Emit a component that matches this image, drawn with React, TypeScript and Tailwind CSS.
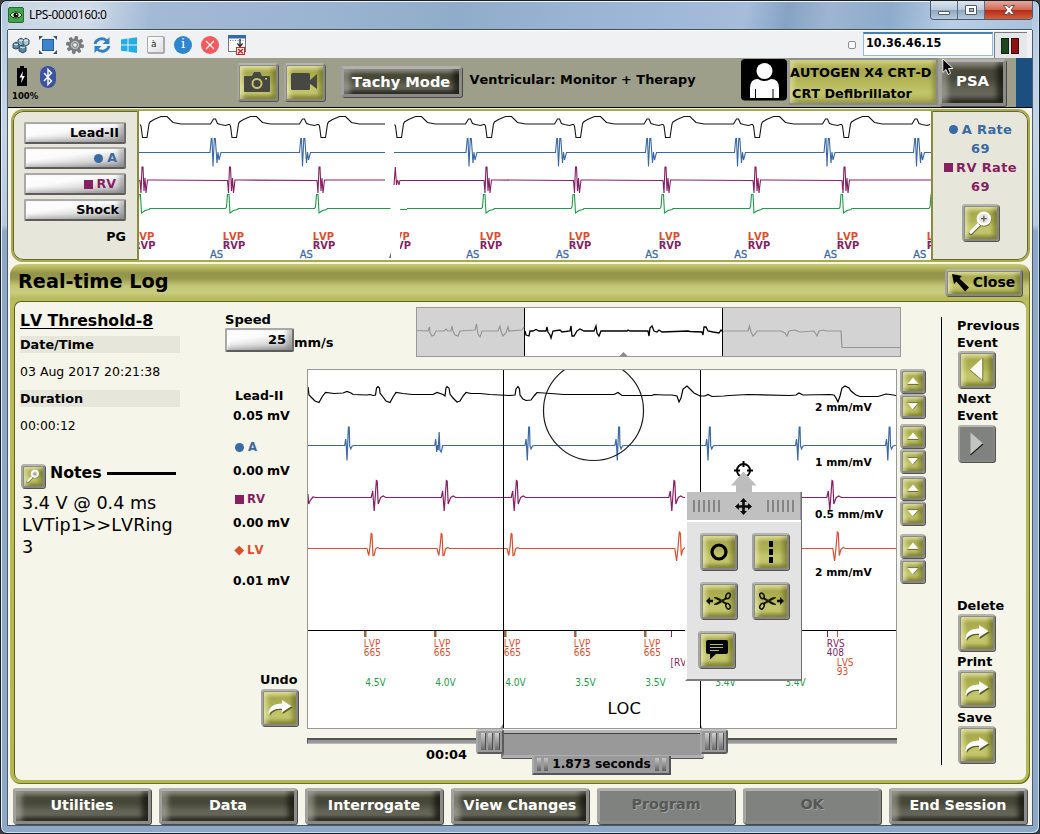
import React from 'react';

const EDGE = 'border-[2px] border-t-[#b4b4b2] border-l-[#a4a4a2] border-r-[#868684] border-b-[#868684] rounded-[3px]';
const OLIVE =
  EDGE +
  ' flex shrink-0 items-center justify-center outline-none bg-[linear-gradient(180deg,#c8ca72_0%,#a9aa4e_22%,#b1b353_45%,#c2c467_62%,#c5c76e_84%,#a8a94c_100%)] shadow-[inset_1px_1px_0_#8c8c80,inset_4px_3px_4px_rgba(244,244,200,0.6),inset_-4px_-3px_4px_rgba(84,86,14,0.5),1px_1px_0_#55554f]';
const DARK =
  'border-[3px] border-t-[#b0b0ae] border-l-[#a0a09e] border-r-[#8a8a88] border-b-[#8a8a88] rounded-[3px] flex shrink-0 items-center justify-center text-white bg-[linear-gradient(180deg,#77786a_0%,#474838_22%,#46473a_40%,#616253_65%,#66675a_80%,#33342a_100%)] shadow-[inset_6px_2px_5px_rgba(215,215,205,0.4),inset_-6px_-2px_5px_rgba(15,16,8,0.7),1px_1px_0_#4a4a46]';
const OFF =
  'border-[3px] border-t-[#b0b0ae] border-l-[#a4a4a2] border-r-[#868684] border-b-[#868684] rounded-[3px] flex shrink-0 items-center justify-center text-[#555855] bg-[#80827f] shadow-[1px_1px_0_#4a4a46]';
const FIELD =
  'border-[2px] border-t-[#a9a9a9] border-l-[#a9a9a9] border-r-[#6e6e6e] border-b-[#5c5c5c] rounded-[2px] flex shrink-0 items-center justify-end bg-[linear-gradient(172deg,#ffffff_0%,#fbfbfb_38%,#d4d4d4_72%,#a0a0a0_100%)] shadow-[inset_-5px_-2px_4px_rgba(90,90,90,0.35),inset_2px_2px_3px_#ffffff]';

type P = [number, number][];
const pts = (a: P) => a.map((p) => p.join(',')).join(' ');

const RedoArrow = () => (
  <svg width="26" height="20" viewBox="0 0 26 20">
    <path d="M2 17C2 9 7 5.500 15 5.500V2L25 8.500L15 15V11C9 10.500 5 12 2 17Z" transform="translate(.8 1)" fill="#5c5d30" />
    <path d="M1.500 16.500C1.500 9 7 5.500 15 5.500V2L24.500 8.200L15 14.200V10.800C9 10.300 4.500 12 1.500 16.500Z" fill="#fff" />
  </svg>
);

const Magnifier = ({ size, plus }: { size: number; plus?: boolean }) => (
  <svg width={size} height={size} viewBox="0 0 26 26">
    <path d="M3 24L12 15" stroke="#6b6c38" strokeWidth="4.500" strokeLinecap="round" />
    <path d="M3 23L12 14" stroke="#fff" strokeWidth="3.500" strokeLinecap="round" />
    <circle cx="17" cy="10" r="7.500" fill="#77783e" />
    <circle cx="16.500" cy="9" r="7.500" fill="#fff" />
    <circle cx="16.500" cy="9" r="5" fill="#e4e4dc" />
    {plus ? <path d="M13.500 9h6M16.500 6v6" stroke="#555" strokeWidth="1.300" /> : <circle cx="16.500" cy="9" r="3" fill="#a5a68a" />}
  </svg>
);

const Dot = () => <span className="size-[9px] rounded-full bg-[#3a69a3]" />;
const Square = () => <span className="size-[9px] bg-[#871f63]" />;

function ToolbarIcons() {
  return (
    <div className="flex items-center gap-[9px] pl-[4px]">
      <svg width="18" height="18" viewBox="0 0 18 18">
        <g stroke="#2f4f62" strokeWidth="1">
          <path d="M6 4l3-2 3 2v4l-3 2-3-2z" fill="#8fb0c4" />
          <path d="M1 8l3-2 3 2v4l-3 1-3-1z" fill="#5f8aa5" />
          <path d="M11 4l3-2 3 2v4l-3 2-3-2z" fill="#a9c4d3" />
          <path d="M7 11l3-2 4 2v4l-3 2-4-2z" fill="#5b859f" />
        </g>
        <path d="M7 4l2 1 2-1M2 8l2 1 2-1M12 4l2 1 2-1M8 11l3 1 2-1" stroke="#e9f2f7" fill="none" />
      </svg>
      <svg width="18" height="18" viewBox="0 0 18 18">
        <rect x="3.500" y="3.500" width="11" height="11" fill="#3f83cb" stroke="#1d5fa8" />
        <path d="M0 4V0h4L0 4M14 0h4v4L14 0M0 14v4h4L0 14M18 14v4h-4L18 14" fill="#3a5064" />
      </svg>
      <svg width="18" height="18" viewBox="0 0 18 18">
        <g fill="#787c7e">
          <circle cx="9" cy="9" r="6.500" />
          {[0, 45, 90, 135].map((a) => (
            <rect key={a} x="7.200" y="0" width="3.600" height="18" rx="1" transform={`rotate(${a + 10} 9 9)`} />
          ))}
        </g>
        <circle cx="9" cy="9" r="4.300" fill="#b5b9bb" />
        <circle cx="9" cy="9" r="2.300" fill="#f0f1f2" stroke="#666" strokeWidth=".8" />
      </svg>
      <svg width="18" height="18" viewBox="0 0 18 18" fill="none" stroke="#3181c4" strokeWidth="2.800">
        <path d="M2 8C3 3.500 9 .8 13.500 4.500M16 10C15 14.500 9 17.200 4.500 13.500" />
        <path d="M16.500 1v7h-7zM1.500 17v-7h7z" fill="#3181c4" stroke="none" />
      </svg>
      <svg width="18" height="18" viewBox="0 0 18 18" fill="#22aee8">
        <path d="M1 3.500l6.500-.9v6H1zM8.500 2.400L17 1.200v7.400H8.500zM1 9.600h6.500v6L1 14.700zM8.500 9.600H17v7.400l-8.500-1.200z" />
      </svg>
      <span className="flex h-[18px] w-[18px] items-start rounded-[2px] border border-r-2 border-b-2 border-[#a9acae] bg-[linear-gradient(135deg,#ffffff,#dfe1e2)] pl-[3px] font-['DejaVu_Sans_Mono'] text-[9px] leading-[15px] text-[#222]">à</span>
      <span className="flex size-[18px] items-center justify-center rounded-full bg-[#2f86cd] pb-px font-['DejaVu_Serif'] text-[13px] leading-[18px] text-white">i</span>
      <svg width="18" height="18" viewBox="0 0 18 18">
        <circle cx="9" cy="9" r="9" fill="#f4595b" />
        <path d="M5 5l8 8m0-8l-8 8" stroke="#fff" strokeWidth="1.100" />
      </svg>
      <svg width="19" height="20" viewBox="0 0 19 20">
        <rect x=".5" y="2.500" width="17" height="14" fill="#fff" stroke="#777" />
        <rect y="0" width="18" height="3.500" fill="#2b6cb5" />
        <path d="M2 5.500h14" stroke="#777" strokeDasharray="1 1.500" />
        <path d="M12 4v7M9.300 8.300L12 11.500l2.700-3.200" stroke="#222" strokeWidth="1.300" fill="none" />
        <rect x="8.500" y="12.500" width="8" height="7" fill="#fff" stroke="#d0222a" />
        <path d="M10 14l5 4.500m0-4.500l-5 4.500" stroke="#d0222a" strokeWidth="1.600" />
      </svg>
    </div>
  );
}

function TitleBar() {
  return (
    <div className="flex h-[29px] shrink-0 justify-between rounded-t-[6px] border-b border-[#40505e] bg-[linear-gradient(100deg,#c8d5e4_0%,#cfdbe8_8%,#a3bad6_14%,#9bb4d2_30%,#8fadca_44%,#9bb4d4_56%,#a5bcdb_72%,#86a3c4_76%,#9db5d2_80%,#8dabcb_86%,#b9cfe6_92%,#a9c1dc_100%)] shadow-[inset_0_1px_0_#eef4fa]">
      <div className="flex items-center">
        <svg width="16" height="16" viewBox="0 0 16 16">
          <rect x=".5" y=".5" width="15" height="15" rx="1.500" fill="#3ea745" stroke="#2a6a30" />
          <path d="M2 8C4.500 3.800 11.500 3.800 14 8C11.500 12 4.500 12 2 8Z" fill="#cfe3cf" stroke="#1d3a20" strokeWidth="1" />
          <circle cx="8" cy="8" r="2.500" fill="#111" />
          <circle cx="8.600" cy="7.400" r=".7" fill="#fff" />
        </svg>
        <span className="ml-[5px] font-['Noto_Sans'] text-[12px] tracking-[-0.35px] text-black [text-shadow:0_0_6px_white]">LPS-0000160:0</span>
      </div>
      <div className="mr-[-1px] flex h-[19px] overflow-hidden rounded-b-[4px] border border-t-0 border-[#4a5b6d]">
        <span className="flex w-[27px] items-center justify-center border-r border-[#5a6b7d] bg-[linear-gradient(180deg,#dbe5ef_0%,#b9cadb_48%,#8fa6bf_52%,#b4cadf_100%)]">
          <span className="mt-[5px] h-[4px] w-[12px] rounded-[1px] border border-[#535d66] bg-white" />
        </span>
        <span className="flex w-[27px] items-center justify-center border-r border-[#5a6b7d] bg-[linear-gradient(180deg,#dbe5ef_0%,#b9cadb_48%,#8fa6bf_52%,#b4cadf_100%)]">
          <span className="flex h-[10px] w-[12px] items-center justify-center rounded-[1px] border border-[#535d66] bg-white">
            <span className="h-[4px] w-[5px] border border-[#535d66] bg-[#9fb3c6]" />
          </span>
        </span>
        <span className="flex w-[47px] items-center justify-center bg-[linear-gradient(180deg,#e3aa9e_0%,#cf6a55_48%,#b52c14_52%,#d2603f_100%)]">
          <svg width="12" height="10" viewBox="0 0 12 10">
            <path d="M.5.500H4L6 2.800L8 .5H11.500L8 5L11.500 9.500H8L6 7.200L4 9.500H.5L4 5Z" fill="#fff" stroke="#5a4040" strokeWidth=".9" />
          </svg>
        </span>
      </div>
    </div>
  );
}

function Toolbar() {
  return (
    <div className="flex h-[28px] shrink-0 justify-between border-t border-white bg-[#f0f1f3]">
      <ToolbarIcons />
      <div className="flex">
        <span className="mt-[10px] mr-[7px] size-[8px] rounded-[2px] border border-[#8d8f91] bg-[#fafafa]" />
        <div className="mt-px flex h-[24px] w-[130px] items-center border border-t-2 border-[#8fbde2] border-t-[#4a80aa] bg-white pb-[2px] pl-[2px] font-['DejaVu_Sans_Condensed'] text-[12.5px] font-bold text-black">10.36.46.15</div>
        <div className="mt-px mr-[5px] ml-px flex h-[26px] w-[33px] items-center gap-[2px] border-t border-l border-[#7c7c7c] bg-[#e6e7ea] pl-[6px]">
          <span className="h-[16px] w-[8px] border border-[#10240f] bg-[#1f451e]" />
          <span className="h-[16px] w-[8px] border border-[#3c0a0a] bg-[#8d1212]" />
        </div>
      </div>
    </div>
  );
}

function Header() {
  return (
    <div className="flex h-[50px] shrink-0 border-b border-black bg-[#9d9f8b]">
      <div className="w-[229px] pl-[4px]">
        <div className="flex h-[30px] items-end gap-[13px] pl-[5px]">
          <svg width="10" height="20" viewBox="0 0 10 20" className="mb-[2px]">
            <path d="M3 0h4v2H10V20H0V2H3Z" fill="#000" />
            <path d="M6 5L2.500 11.500H5L4 17L7.800 10H5.300Z" fill="#fff" />
          </svg>
          <svg width="16" height="22" viewBox="0 0 16 22">
            <rect width="16" height="22" rx="8" fill="#3c52a5" />
            <path d="M4 7L11.500 15L8 18.500V3.500L11.500 7L4 15" fill="none" stroke="#fff" strokeWidth="1.400" />
          </svg>
        </div>
        <div className="mt-[3px] text-[8.500px] leading-[10px] font-bold">100%</div>
      </div>
      <button className={`${OLIVE} mt-[5px] h-[38px] w-[41px]`}>
        <svg width="26" height="20" viewBox="0 0 26 20">
          <path d="M1 4H8L10 0H16L18 4H25Q26 4 26 5V19Q26 20 25 20H1Q0 20 0 19V5Q0 4 1 4Z" fill="#484842" />
          <circle cx="13" cy="11.500" r="4.500" fill="none" stroke="#c2c36c" strokeWidth="2" />
          <rect x="21" y="6" width="2" height="1.500" fill="#c2c36c" />
        </svg>
      </button>
      <button className={`${OLIVE} mt-[5px] ml-[6px] h-[38px] w-[41px]`}>
        <svg width="26" height="18" viewBox="0 0 26 18">
          <rect width="19" height="17" rx="1.500" fill="#484842" />
          <path d="M18 8L26 1V16L18 10Z" fill="#484842" />
        </svg>
      </button>
      <button className={`${DARK} mt-[8px] ml-[16px] h-[31px] w-[121px] text-[14.600px] font-bold`}>Tachy Mode</button>
      <span className="mt-[12px] ml-[8px] w-[271px] text-[12.860px] leading-[20px] font-bold whitespace-nowrap">Ventricular: Monitor + Therapy</span>
      <svg width="46" height="42" viewBox="0 0 46 42" className="mt-px ml-px shrink-0">
        <rect width="46" height="41.500" rx="4" fill="#000" />
        <circle cx="23.500" cy="12" r="8" fill="#fff" />
        <path d="M9 39V29Q9 20 17 20Q23.500 24 30 20Q38 20 38 29V39H32.500V30H31.500V39H15V30H14V39Z" fill="#fff" />
      </svg>
      <div className="ml-px flex h-[47px] w-[150px] shrink-0 flex-col rounded-[2px] border-[2px] border-t-[#8e8e8a] border-r-[#8a8a88] border-b-[#8a8a88] border-l-[#9a9a96] bg-[linear-gradient(180deg,#c2c469_0%,#a8a94f_25%,#b4b658_50%,#c3c56b_75%,#b0b257_100%)] text-[12.800px] leading-[21px] font-bold whitespace-nowrap shadow-[inset_4px_2px_5px_rgba(240,240,190,0.5),inset_-3px_-2px_4px_rgba(80,82,20,0.4)]">
        <span className="mt-[2px]">AUTOGEN X4 CRT-D</span>
        <span className="pl-[2px]">CRT Defibrillator</span>
      </div>
      <button className={`${DARK} mt-px ml-px h-[47px] w-[67px] pb-[3px] text-[14.800px] font-bold`}>PSA</button>
      <span className="ml-[10px] h-full w-[16px] bg-[#1a4f80]" />
    </div>
  );
}

const BEATS = [141, 230.5, 319.5, 395.5, 485.5, 574.5, 664, 753.5, 842.5, 932];

function LiveTraces() {
  const lead = (from: number, to: number) => {
    const p: P = [];
    BEATS.slice(from, to).forEach((q, i) => {
      if (i > 0) p.push([q - 20, 124], [q - 17, 119], [q - 15, 119], [q - 13, 123.5], [q - 10, 124.5], [q - 5, 125.5], [q - 2, 124.5]);
      if (q < 930) p.push([q - 1, 124.5], [q, 126], [q + 1.5, 137.5], [q + 6, 137.5], [q + 8, 124], [q + 9, 122], [q + 13, 119.5], [q + 20, 116.5], [q + 26, 116.5], [q + 32, 122.5], [q + 40, 124]);
    });
    return p;
  };
  const atr = (cs: number[], start: number, end: number) => {
    const p: P = [[start, 152.5]];
    cs.forEach((c) => p.push([c - 3, 152.5], [c - 1.7, 138.5], [c - 1, 138.5], [c, 166.5], [c + 1.3, 138.5], [c + 2.3, 138.5], [c + 4, 163], [c + 5, 152], [c + 6, 160], [c + 8, 152.5]));
    p.push([end, 152.5]);
    return p;
  };
  const rv = (cs: number[], start: number, end: number) => {
    const p: P = [[start, 180.5]];
    cs.forEach((c) => p.push([c - 2, 180.5], [c - 1, 193], [c, 167], [c + 1, 167], [c + 2, 191], [c + 3, 178], [c + 4, 193], [c + 5.5, 180], [c + 12, 180]));
    p.push([end, 180]);
    return p;
  };
  const shock = (cs: number[], start: number, end: number) => {
    const p: P = [[start, 208.5]];
    cs.forEach((c) => p.push([c - 4, 208.5], [c - 3, 207], [c - 2, 194.5], [c - 0.5, 194.5], [c + 0.5, 213], [c + 4, 210.5], [c + 8, 209.5], [c + 9, 208.5]));
    p.push([end, 208.5]);
    return p;
  };
  const c1 = [142, 229.5, 319];
  const c2 = [486, 575.5, 665, 755, 844];
  const marks = [133, 222.7, 312.7, 479.7, 568.7, 658.7, 747.7, 836.7, 926.7];
  return (
    <svg width="792" height="149" viewBox="139 111 792 149" className="block bg-white" fill="none" strokeWidth="1.100">
      <defs>
        <clipPath id="gapRight"><rect x="400" y="110" width="540" height="152" /></clipPath>
        <clipPath id="gapLeft"><rect x="130" y="110" width="261" height="152" /></clipPath>
      </defs>
      <g stroke="#161616">
        <polyline points={pts([...lead(0, 3), [385, 124]])} />
        <polyline points={pts(lead(3, 10))} />
      </g>
      <g stroke="#3a69a3">
        <polyline points={pts(atr([213, 302.5], 139, 385))} />
        <polyline points={pts(atr([469, 558.5, 648.5, 737.5, 827, 916.5], 394, 931))} />
      </g>
      <g stroke="#871f63">
        <polyline points={pts(rv(c1, 139, 385))} />
        <polyline points={pts([[394, 185], [395.3, 167], [396.5, 185], [397.5, 180], [399, 185], [400, 180]])} />
        <polyline points={pts(rv(c2, 400, 931))} />
      </g>
      <g stroke="#1f9a4a">
        <polyline points={pts(shock([141, 229.5, 318.5], 139, 390.5))} />
        <polyline points={pts([[400, 209.5], [407, 209.5]])} />
        <polyline points={pts(shock([485.5, 575, 664, 753.5, 843, 933], 407, 931))} />
      </g>
      <g stroke="none" fontFamily="'DejaVu Sans Condensed'" fontWeight="bold" fontSize="11">
        {marks.map((x) => (
          <g key={x}>
            <text x={x} y="240" fill="#d94f30">LVP</text>
            <text x={x} y="248.800" fill="#871f63">RVP</text>
          </g>
        ))}
        <g clipPath="url(#gapRight)">
          <text x="388.500" y="240" fill="#d94f30">LVP</text>
          <text x="388.500" y="248.800" fill="#871f63">RVP</text>
        </g>
        <g fill="#3a69a3">
          {[210, 299.7, 466.3, 556, 645.3, 734.3, 824, 913.3].map((x) => (
            <text key={x} x={x} y="258" fontWeight="normal" stroke="#3a69a3" strokeWidth=".3">AS</text>
          ))}
          <text x="389" y="258" clipPath="url(#gapLeft)">AS</text>
        </g>
      </g>
    </svg>
  );
}

function LiveStrip() {
  return (
    <div className="mt-px ml-[3px] flex h-[153px] w-[1019px] shrink-0 overflow-hidden rounded-[12px] border-[2px] border-[#a8aa4c] bg-[#e6e6db] shadow-[inset_0_0_0_1px_#66682a]">
      <div className="flex w-[126px] flex-col items-end border-r-2 border-[#8a8c3c] pt-[11px] pr-[11px] text-[12.700px] font-bold">
        <div className={`${FIELD} h-[22px] w-[102px] pr-[5px]`}>Lead-II</div>
        <div className={`${FIELD} mt-[3px] h-[22px] w-[102px] gap-[4px] pr-[7px] text-[#3a69a3]`}><Dot />A</div>
        <div className={`${FIELD} mt-[4px] h-[22px] w-[102px] gap-[3px] pr-[8px] text-[#871f63]`}><Square />RV</div>
        <div className={`${FIELD} mt-[4px] h-[22px] w-[102px] pr-[5px]`}>Shock</div>
        <div className="mt-[7px] leading-[18px]">PG</div>
      </div>
      <div className="w-[792px] shrink-0"><LiveTraces /></div>
      <div className="flex flex-1 flex-col items-center border-l-[2px] border-[#8a8c3c] pt-[9px] text-[13px] leading-[19px] font-bold tracking-[0.350px]">
        <div className="flex items-center gap-[4px] text-[#3a69a3]"><Dot />A Rate</div>
        <div className="text-[#3a69a3]">69</div>
        <div className="flex items-center gap-[3px] text-[#871f63]"><Square />RV Rate</div>
        <div className="text-[#871f63]">69</div>
        <button className={`${OLIVE} mt-[8px] size-[37px]`}><Magnifier size={25} plus /></button>
      </div>
    </div>
  );
}

const OV_LEFT: P = [[417, 330.5], [428, 331], [429.500, 327], [430, 333], [432, 336], [434, 335], [436, 331], [444, 331], [446, 329], [448, 331], [451, 331], [452, 326], [453, 331], [455, 335], [458, 336], [460, 331], [475, 330], [476.500, 324], [478, 334], [480, 337], [482, 331], [498, 331], [500, 326], [501, 331], [503, 336], [506, 333], [508, 327], [509, 331], [522, 330], [524, 327]];
const OV_MID: P = [[525, 331], [526, 335], [529, 336], [530, 331], [533, 331], [536, 329.500], [539, 331], [546, 331], [547, 327], [548, 332], [550, 335], [551, 338], [553, 331], [560, 330], [562, 332], [570, 331], [571, 326], [572, 336], [574, 336], [577, 331], [580, 329], [584, 331], [594, 331], [596, 326], [597, 333], [599, 336], [601, 331], [627, 331], [628, 330], [630, 331], [648, 331], [649, 336], [650, 328], [652, 326], [654, 331], [657, 332], [659, 330], [662, 332], [688, 331], [690, 331.500], [702, 332], [703, 335], [704, 327], [706, 327], [708, 331], [713, 332], [719, 333], [721, 330], [723, 332]];
const OV_RIGHT: P = [[724, 331], [748, 331], [749.500, 326], [751, 332], [753, 336], [755, 334], [757, 331], [766, 331], [781, 331], [785, 333], [787, 336], [789, 331], [795, 330], [800, 332], [814, 331], [817, 336], [819, 331], [823, 330], [826, 331], [841, 331], [842, 347.500], [900, 347.500]];

function Overview() {
  return (
    <svg width="485" height="50" viewBox="416 307 485 50" className="mt-[5px] shrink-0" fill="none">
      <rect x="416.500" y="307.500" width="484" height="49" fill="#d3d3d3" stroke="#999" />
      <rect x="524.500" y="308" width="198" height="48" fill="#fff" />
      <path d="M524.500 308V356M722.500 308V356" stroke="#000" />
      <polyline points={pts(OV_LEFT)} stroke="#979797" strokeWidth="1.200" />
      <polyline points={pts(OV_RIGHT)} stroke="#979797" strokeWidth="1.200" />
      <polyline points={pts(OV_MID)} stroke="#000" strokeWidth="1.300" />
      <path d="M619 356.500L623.500 352L628 356.500Z" fill="#8a8a8a" />
    </svg>
  );
}

const LEAD: P = [[308, 387], [309, 395], [312, 398], [315, 401], [319, 402.500], [322, 397], [325.500, 392.500], [334, 393.500], [343, 393], [347, 391.500], [351, 393], [353, 394.500], [367, 395], [370, 394.500], [373, 395.500], [375.500, 395], [376.500, 388], [378, 386.500], [379.500, 388], [380, 393], [383, 397], [386, 401], [390, 402.500], [393, 397], [396, 392.500], [403, 393.500], [412, 394.500], [433, 394.500], [437, 392.500], [443, 394.500], [445, 396], [446, 388], [447, 386.500], [449, 388], [450, 394], [453, 398], [457, 402], [460, 401], [463, 396], [466, 392.500], [471, 393.500], [480, 393.500], [490, 394.500], [510, 395.500], [515, 395], [516, 389], [518, 386.500], [519.500, 389], [520, 395], [523, 399], [526, 400.500], [531, 400], [534, 396], [537, 392.500], [564, 394.500], [614, 394.500], [618, 392.500], [622, 395.500], [652, 395.500], [654, 394.500], [664, 395], [672, 395], [677, 396], [679, 402], [681, 398], [683, 389], [687, 386], [690, 389], [694, 393], [700, 396], [705, 396], [708, 394.500], [712, 396.500], [724, 396], [729, 395.500], [748, 394.500], [790, 395.500], [796, 395], [799, 393], [803, 395], [830, 394.500], [834, 395], [836, 398], [838, 402], [840, 396], [842, 388], [845, 386], [849, 388], [851, 391], [856, 395], [860, 396.500], [878, 396.500], [886, 394], [890, 394.500], [896, 395.500]];
const A_SHAPE: P = [[-4, 445.500], [-3, 439], [-2.500, 444], [-1.700, 460.500], [-0.300, 427], [0.500, 427], [1, 446], [2, 449], [3.500, 446], [5.500, 445.500]];
const A_SMALL: P = [[-4, 445.500], [-3, 439], [-2, 452], [-1, 445], [-0.500, 450], [0.500, 432], [1.200, 450], [2.500, 452], [4, 445.500]];
const RV_SHAPE: P = [[-5.500, 497.500], [-4, 491], [-3.500, 498], [-2.500, 511], [-0.300, 480.500], [0.500, 481], [1.500, 504], [3, 500], [4, 497.500], [6.500, 496], [9, 497.500]];
const LV_SHAPE: P = [[-4.500, 548.500], [-2.700, 555.500], [-1.500, 547], [-0.300, 533.500], [0.500, 534], [1.500, 555.500], [2.700, 555], [4, 549], [6, 547.500], [8, 548.500]];
const LV_DEEP: P = [[-4.500, 548.500], [-2.700, 561], [-1.500, 550], [0, 532], [1, 533], [2, 555.500], [3.500, 549.500], [6, 547.500], [8, 548.500]];
const shift = (s: P, dx: number): P => s.map(([x, y]) => [x + dx, y]);

function EventPlot() {
  const pace = [364.5, 434.5, 504.5, 574.5, 644.5];
  return (
    <svg width="590" height="360" viewBox="307 369 590 360" className="block font-normal" fill="none" strokeWidth="1.200">
      <defs><clipPath id="plotArea"><rect x="308" y="370" width="588" height="358" /></clipPath></defs>
      <rect x="307.500" y="369.500" width="589" height="359" fill="#fff" stroke="#999" strokeWidth="1" />
      <g clipPath="url(#plotArea)">
        <polyline points={pts(LEAD)} stroke="#000" />
        <polyline points={pts([[308, 445.500], ...shift(A_SHAPE, 348.700), ...shift(A_SMALL, 438.700), ...shift(A_SHAPE, 529), ...shift(A_SHAPE, 619), ...shift(A_SHAPE, 709.700), ...shift(A_SHAPE, 799.500), ...shift(A_SHAPE, 889.500), [896, 445.500]])} stroke="#3a69a3" />
        <polyline points={pts([[308, 494], [308.700, 504], [310.500, 500], [313, 497], [316, 497.500], ...shift(RV_SHAPE, 376.700), ...shift(RV_SHAPE, 446.700), ...shift(RV_SHAPE, 516.700), ...shift(RV_SHAPE, 674.300), ...shift(RV_SHAPE, 832.300), [896, 497.500]])} stroke="#871f63" />
        <polyline points={pts([[308, 548.500], ...shift(LV_SHAPE, 371.500), ...shift(LV_SHAPE, 441.500), ...shift(LV_SHAPE, 511.500), ...shift(LV_DEEP, 679.300), ...shift(LV_DEEP, 837.300), [896, 548.500]])} stroke="#d94f30" />
        <circle cx="593.500" cy="410.500" r="50" stroke="#1c1c1c" />
        <path d="M308 630.500H896M503.500 370V728M700.500 370V728" stroke="#000" strokeWidth="1" />
        <g fontFamily="'DejaVu Sans Condensed'" fontSize="10">
          {pace.map((x) => (
            <g key={x}>
              <rect x={x - 0.5} y="631" width="2" height="6" fill="#d94f30" />
              <rect x={x + 1} y="631" width="1" height="6" fill="#1f9a4a" />
              <text x={x - 0.7} y="647" fill="#d94f30">LVP</text>
              <text x={x - 0.7} y="656" fill="#d94f30">665</text>
            </g>
          ))}
          <path d="M671.500 631v6M827.500 631v6" stroke="#871f63" strokeWidth="1" />
          <path d="M837.500 631v6" stroke="#d94f30" strokeWidth="1" />
          <g fill="#871f63">
            <text x="670.500" y="666">[RV</text>
            <text x="826.700" y="647">RVS</text>
            <text x="826.700" y="656">408</text>
          </g>
          <g fill="#d94f30">
            <text x="836.700" y="666">LVS</text>
            <text x="836.700" y="675">93</text>
          </g>
          <g fill="#1f9a4a">
            {['4.5V', '4.0V', '4.0V', '3.5V', '3.5V', '3.4V', '3.4V'].map((v, i) => (
              <text key={i} x={365.2 + 70 * i} y="686">{v}</text>
            ))}
          </g>
        </g>
        <g fontFamily="'DejaVu Sans'" fontWeight="bold" fontSize="10.700" fill="#000">
          <text x="815" y="410.700">2 mm/mV</text>
          <text x="815" y="465.800">1 mm/mV</text>
          <text x="815" y="517.800">0.5 mm/mV</text>
          <text x="815" y="575.800">2 mm/mV</text>
        </g>
        <text x="607.500" y="714" fontFamily="'DejaVu Sans'" fontSize="16.300" fill="#000">LOC</text>
      </g>
    </svg>
  );
}

const Scissors = ({ flip }: { flip?: boolean }) => (
  <svg width="26" height="18" viewBox="0 0 26 18" className={flip ? 'scale-x-[-1]' : ''} fill="none" stroke="#0c0c08">
    <ellipse cx="22" cy="3.800" rx="2" ry="3" strokeWidth="1.500" transform="rotate(25 22 3.800)" />
    <ellipse cx="22" cy="14.200" rx="2" ry="3" strokeWidth="1.500" transform="rotate(-25 22 14.200)" />
    <path d="M20.500 5.500L8 12.500Q11 13 14 11L16.500 9.300L21 6.500M20.500 12.500L8 5.500Q11 5 14 7L16.500 8.700L21 11.500" fill="#0c0c08" strokeWidth=".7" />
    <path d="M0 9L4 5V7.800H7V10.200H4V13Z" fill="#0c0c08" stroke="none" />
  </svg>
);

const Grip = () => (
  <span className="flex gap-[3px]">
    {[0, 1, 2, 3, 4, 5].map((i) => <span key={i} className="h-[12px] w-[2px] bg-[#858585]" />)}
  </span>
);

function ToolPalette() {
  return (
    <div className="absolute top-[91px] left-[378px] w-[117px]">
      <svg width="27" height="32" viewBox="730 460 27 32" className="ml-[45px] block" fill="none">
        <circle cx="743.500" cy="470.500" r="6.500" stroke="#000" strokeWidth="2" />
        <path d="M743.500 461v6M734 470.500h6M747 470.500h6" stroke="#000" strokeWidth="2" />
        <path d="M743.500 471.500L756.500 485.500H752V492H736V485.500H731Z" fill="#bcbdbc" />
      </svg>
      <div className="flex h-[189px] flex-col border-r border-b-2 border-l-2 border-r-[#6e6e6e] border-b-[#7e7e7e] border-l-white bg-[#e3e3e3]">
        <div className="flex h-[28px] shrink-0 items-center justify-between border-r border-[#9a9a9a] bg-[#bfc0bf] px-[6px]">
          <Grip />
          <svg width="17" height="17" viewBox="0 0 17 17">
            <path d="M8.500 0L12 4H9.800V7.200H13V5L17 8.500L13 12V9.800H9.800V13H12L8.500 17L5 13H7.200V9.800H4V12L0 8.500L4 5V7.200H7.200V4H5Z" fill="#0a0a0a" />
          </svg>
          <Grip />
        </div>
        <div className="grid grid-cols-[38px_38px] gap-x-[14px] gap-y-[12px] border-t-2 border-white pt-[11px] pl-[13px]">
          <button className={`${OLIVE} size-[37px]`}>
            <svg width="18" height="18" viewBox="0 0 18 18"><circle cx="9" cy="9" r="7" fill="none" stroke="#000" strokeWidth="3.200" /></svg>
          </button>
          <button className={`${OLIVE} size-[37px]`}>
            <svg width="4" height="22" viewBox="0 0 4 22"><path d="M0 0h4v6H0zM0 8h4v6H0zM0 16h4v6H0z" fill="#000" /></svg>
          </button>
          <button className={`${OLIVE} size-[37px]`}><Scissors /></button>
          <button className={`${OLIVE} size-[37px]`}><Scissors flip /></button>
          <button className={`${OLIVE} ml-[-2px] size-[37px]`}>
            <svg width="22" height="20" viewBox="0 0 22 20">
              <path d="M2 0H20Q22 0 22 2V12Q22 14 20 14H10L4 19.500V14H2Q0 14 0 12V2Q0 0 2 0Z" fill="#050505" />
              <path d="M4 4.500h13M4 7.500h13M4 10.500h9" stroke="#b9bb60" strokeWidth="1.100" />
            </svg>
          </button>
        </div>
      </div>
    </div>
  );
}

const Stepper = ({ top }: { top: string }) => (
  <div className={`${top} flex flex-col gap-px pb-px`}>
    <button className={`${OLIVE} h-[24px] w-[25px]`}>
      <svg width="12" height="8" viewBox="0 0 12 8"><path d="M6 .5L11.500 7H.5Z" fill="#fff" /><path d="M.5 7.400H11.500" stroke="#66673a" /></svg>
    </button>
    <button className={`${OLIVE} h-[24px] w-[25px]`}>
      <svg width="12" height="8" viewBox="0 0 12 8"><path d="M.5 1H11.500L6 7.500Z" fill="#fff" /><path d="M.5 .6H11.500M11.500 1L6 7.500" stroke="#66673a" strokeWidth=".8" /></svg>
    </button>
  </div>
);

const Reading = ({ v, top }: { v: string; top: string }) => (
  <div className={`${top} flex gap-[3px] text-[12.600px] leading-[18px]`}><span className="w-[31px] text-[12.300px]">{v}</span>mV</div>
);

const Handle = ({ pos }: { pos: string }) => (
  <span className={`${pos} absolute flex h-[25px] w-[28px] items-center justify-center gap-[2px] rounded-[3px] border-2 border-t-[#c0c0c0] border-r-[#5a5a5a] border-b-[#5a5a5a] border-l-[#a8a8a8] bg-[#9a9a9a]`}>
    {[0, 1, 2].map((i) => <span key={i} className="h-[17px] w-[5px] border-r border-[#4f4f4f] bg-[linear-gradient(180deg,#d0d0d0,#6a6a6a)]" />)}
  </span>
);

function TimeSlider() {
  return (
    <div className="relative ml-[82px] h-[50px] w-[590px]">
      <div className="absolute top-[9px] left-0 h-[6px] w-[590px] border-t-2 border-b border-l border-t-[#555] border-b-[#b8b8b8] border-l-[#555] bg-[#999]" />
      <div className="absolute top-px left-[194px] h-[28px] w-[203px] rounded-[2px] border-[3px] border-t-[#b9b9b9] border-r-[#c4c4c4] border-b-[#b0b0b0] border-l-[#777] bg-[#999] shadow-[inset_0_1px_0_#444,0_1px_0_#555]" />
      <svg width="204" height="6" viewBox="0 0 204 6" className="absolute top-[-5px] left-[192px]"><path d="M0 6L4 0V6ZM204 6L202 1V6Z" fill="#8e8e8e" /></svg>
      <Handle pos="top-0 left-[169px]" />
      <Handle pos="top-0 left-[393px]" />
      <div className="absolute top-[17px] left-[119px] text-[12.900px] leading-[18px] font-bold">00:04</div>
      <div className="absolute top-[27px] left-[225px] flex h-[19px] w-[139px] items-center justify-between border-2 border-t-0 border-r-[#555] border-b-[#555] border-l-[#aaa] bg-[#9a9a9a] px-[3px] pb-px text-[12.200px] font-bold whitespace-nowrap">
        <span className="flex gap-[3px]">{[0, 1].map((i) => <span key={i} className="h-[13px] w-[4px] bg-[linear-gradient(180deg,#c8c8c8,#606060)]" />)}</span>
        1.873 seconds
        <span className="flex gap-[3px]">{[0, 1].map((i) => <span key={i} className="h-[13px] w-[4px] bg-[linear-gradient(180deg,#c8c8c8,#606060)]" />)}</span>
      </div>
    </div>
  );
}

function DetailColumn() {
  return (
    <div className="w-[210px] shrink-0 pl-[5px]">
      <div className="mt-[9px] text-[15.700px] leading-[20px] font-bold underline decoration-1 underline-offset-[2px] [text-decoration-skip-ink:none]">LV Threshold-8</div>
      <div className="mt-[5px] h-[17px] w-[160px] bg-[#e7e6da] text-[12.800px] leading-[17px] font-bold">Date/Time</div>
      <div className="mt-[10px] text-[12.500px] leading-[17px]">03 Aug 2017 20:21:38</div>
      <div className="mt-[10px] h-[17px] w-[160px] bg-[#e7e6da] text-[12.800px] leading-[17px] font-bold">Duration</div>
      <div className="mt-[10px] text-[12.400px] leading-[17px]">00:00:12</div>
      <div className="mt-[30px] flex h-[25px] pl-px">
        <button className={`${OLIVE} size-[24px]`}><Magnifier size={14} /></button>
        <span className="ml-[5px] text-[15.800px] leading-[18px] font-bold">Notes</span>
        <span className="mt-[8px] ml-[5px] h-[3px] w-[69px] bg-black" />
      </div>
      <div className="mt-[3px] w-[190px] pl-[2px] text-[17.600px] leading-[22px]">
        3.4 V @ 0.4 ms<br />LVTip1&gt;&gt;LVRing<br />3
      </div>
    </div>
  );
}

function LogPanel() {
  return (
    <div className="mt-[2px] ml-[2px] flex h-[520px] w-[1020px] shrink-0 flex-col rounded-[11px] bg-[linear-gradient(180deg,#c8ca7c_0px,#b4b65c_4px,#94954a_9px,#96974c_14px,#c4c676_22px,#c9cb80_29px,#b9bc5a_34px,#b5b850_100%)] pr-[4px] pb-[4px] pl-[4px] shadow-[inset_-1px_-1px_0_#6d6f28]">
      <div className="flex h-[37px] shrink-0 items-center justify-between pr-[4px] pl-[4px]">
        <h1 className="text-[19.300px] font-bold">Real-time Log</h1>
        <button className={`${OLIVE} h-[27px] w-[77px] gap-[3px] text-[14px] font-bold`}>
          <svg width="18" height="18" viewBox="0 0 18 18"><path d="M0 0L10 2L7.500 4.500L17 13.500L13 17.500L4.500 7.500L2 10Z" fill="#000" /></svg>
          Close
        </button>
      </div>
      <div className="flex flex-1 overflow-hidden rounded-[7px] border-t border-l border-[#5f6124] bg-[#f5f5e9]">
        <DetailColumn />
        <div className="w-[701px] shrink-0 font-bold">
          <div className="flex h-[67px]">
            <div className="w-[191px] pt-[9px]">
              <div className="text-[13.100px] leading-[18px]">Speed</div>
              <div className="mt-[-1px] flex">
                <div className={`${FIELD} h-[24px] w-[69px] pr-[6px] text-[13px]`}>25</div>
                <span className="mt-[6px] text-[13px] leading-[18px]">mm/s</span>
              </div>
            </div>
            <Overview />
          </div>
          <div className="flex h-[360px]">
            <div className="w-[82px] pl-[8px]">
              <div className="mt-[18px] pl-[2px] text-[12.500px] leading-[18px]">Lead-II</div>
              <Reading v="0.05" top="mt-[2px]" />
              <div className="mt-[13px] flex items-center gap-[4px] pl-[2px] text-[11.700px] leading-[18px] text-[#3a69a3]"><Dot />A</div>
              <Reading v="0.00" top="mt-[6px]" />
              <div className="mt-[10px] flex items-center gap-[3px] pl-[2px] text-[11.700px] leading-[18px] text-[#871f63]"><Square />RV</div>
              <Reading v="0.00" top="mt-[6px]" />
              <div className="mt-[9px] flex items-center gap-[3px] pl-[2px] text-[11.700px] leading-[18px] text-[#d94f30]">
                <span className="flex w-[9px] justify-center"><span className="size-[6.500px] rotate-45 bg-[#d94f30]" /></span>LV
              </div>
              <Reading v="0.01" top="mt-[13px]" />
              <div className="mt-[81px] pl-[27px] text-[12.800px] leading-[18px]">Undo</div>
              <button className={`${OLIVE} ml-[28px] size-[37px]`}><RedoArrow /></button>
            </div>
            <div className="relative w-[590px] shrink-0">
              <EventPlot />
              <ToolPalette />
            </div>
            <div className="ml-[3px]">
              <Stepper top="" />
              <Stepper top="mt-[5px]" />
              <Stepper top="mt-[2px]" />
              <Stepper top="mt-[8px]" />
            </div>
          </div>
          <TimeSlider />
        </div>
        <div className="mt-[15px] ml-[15px] h-[448px] w-px shrink-0 bg-black" />
        <div className="mt-[15px] ml-[15px] flex flex-col text-[12.800px] leading-[17px] font-bold">
          <span>Previous<br />Event</span>
          <button className={`${OLIVE} mb-px ml-px size-[37px]`}>
            <svg width="15" height="25" viewBox="0 0 15 25"><path d="M1 12.500L13.500 1V24Z" fill="#fff" /><path d="M13.800 1V24L1 13" stroke="#77783c" fill="none" /></svg>
          </button>
          <span className="mt-px">Next<br />Event</span>
          <button className={`${EDGE} mt-px mb-px ml-px flex size-[37px] items-center justify-center bg-[#80827f] shadow-[1px_1px_0_#55554f]`}>
            <svg width="15" height="25" viewBox="0 0 15 25"><path d="M14 12.500L1.500 1.500V23.500Z" fill="#c4c4c2" /><path d="M1.500 24L14 13" stroke="#222" strokeWidth="1.200" /></svg>
          </button>
          {['Delete', 'Print', 'Save'].map((t, i) => (
            <div key={t} className={i === 0 ? 'mt-[134px]' : 'mt-px'}>
              <div>{t}</div>
              <button className={`${OLIVE} mb-px ml-px size-[37px]`}><RedoArrow /></button>
            </div>
          ))}
        </div>
      </div>
    </div>
  );
}

function Footer() {
  return (
    <div className="mt-[4px] ml-[5px] flex gap-[8px] text-[14.300px] font-bold">
      {['Utilities', 'Data', 'Interrogate', 'View Changes'].map((t) => (
        <button key={t} className={`${DARK} h-[36px] w-[138px] whitespace-nowrap`}>{t}</button>
      ))}
      {['Program', 'OK'].map((t) => (
        <button key={t} className={`${OFF} h-[36px] w-[138px] pb-[2px] [text-shadow:1px_1px_0_#a0a29f]`}>{t}</button>
      ))}
      <button className={`${DARK} h-[36px] w-[138px]`}>End Session</button>
    </div>
  );
}

export default function App() {
  return (
    <div className="relative flex h-[834px] w-[1040px] flex-col overflow-hidden bg-[#3a3f46] font-['DejaVu_Sans',sans-serif] text-black [font-kerning:none]">
      <div className="flex flex-1 flex-col rounded-[7px] border border-[#1c1d24] bg-[linear-gradient(180deg,#b4cae2_0px,#c5d5e6_120px,#b9cadd_224px,#8fa8c8_230px,#8ea9c8_100%)] px-[7px] pb-[7px] shadow-[inset_1px_0_0_#dff0fa,inset_-1px_-1px_0_#bfe4f4]">
        <TitleBar />
        <div className="flex h-[796px] flex-col border-b border-[#4a586c] bg-[#f5f5e9] shadow-[-1px_0_0_#4a5a70,1px_0_0_#4a5a70]">
          <Toolbar />
          <Header />
          <LiveStrip />
          <LogPanel />
          <Footer />
        </div>
      </div>
      <svg width="13" height="19" viewBox="0 0 13 19" className="absolute top-[58px] left-[942px]">
        <path d="M.8 .8V14.500L4 11.500L6 16.500L8.500 15.300L6.500 10.500H11Z" fill="#000" stroke="#fff" strokeWidth=".9" />
      </svg>
    </div>
  );
}
